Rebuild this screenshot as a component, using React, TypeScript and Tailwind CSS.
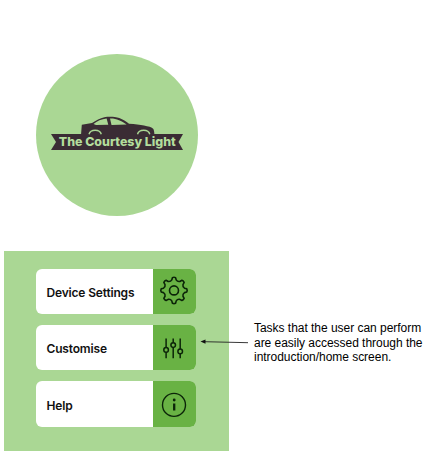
import type { ReactNode } from 'react';

function gearPath() {
  const at = (deg: number, r: number) => {
    const a = (deg * Math.PI) / 180;
    return `${(15 + r * Math.sin(a)).toFixed(2)} ${(15.4 - r * Math.cos(a)).toFixed(2)}`;
  };
  let d = `M${at(-7, 12.9)}`;
  for (let k = 0; k < 8; k++) {
    const a = k * 45;
    d += ` Q${at(a, 13.6)} ${at(a + 7, 12.9)}`;
    d += ` L${at(a + 12, 10.7)} Q${at(a + 22.5, 9.2)} ${at(a + 33, 10.7)} L${at(a + 38, 12.9)}`;
  }
  return d + 'Z';
}

const Gear = () => (
  <svg viewBox="0 0 30 30" className="h-[30px] w-[30px] -translate-y-px" fill="none" stroke="#0b2408" strokeWidth="1.6" strokeLinejoin="round">
    <path d={gearPath()} />
    <circle cx="15" cy="15.4" r="4.5" />
  </svg>
);

const Sliders = () => (
  <svg viewBox="0 0 30 30" className="h-[30px] w-[30px]" fill="none" stroke="#0b2408" strokeWidth="1.5">
    <path d="M7.1 5.5V14.5M7.1 19.3V25.3M14.2 5.5V9.7M14.2 14.5V25.3M21.2 5.5V16M21.2 20.8V25.3" />
    <circle cx="7.1" cy="16.9" r="2.3" />
    <circle cx="14.2" cy="12.1" r="2.3" />
    <circle cx="21.2" cy="18.4" r="2.3" />
  </svg>
);

const Info = () => (
  <svg viewBox="0 0 30 30" className="h-[30px] w-[30px]" fill="none" stroke="#0b2408" strokeWidth="1.4">
    <circle cx="15" cy="15.9" r="11.5" />
    <path d="M15.2 14.4V21.6" strokeWidth="2.3" />
    <circle cx="15.2" cy="11" r="1.4" fill="#0b2408" stroke="none" />
  </svg>
);

function Row({ label, children }: { label: string; children: ReactNode }) {
  return (
    <button className="flex h-[45.3px] w-full overflow-hidden rounded-[6px] bg-white text-left">
      <span className="flex flex-1 items-center pl-[10.5px] pt-[3px] text-[12px] font-semibold tracking-[-0.17px] text-[#111]">{label}</span>
      <span className="flex h-full w-[42.5px] items-center justify-center bg-[#69b244]">{children}</span>
    </button>
  );
}

const Logo = () => (
  <svg viewBox="0 0 162 162" className="h-[162px] w-[162px]">
    <circle cx="81" cy="81" r="81" fill="#aad794" />
    <path d="M45 81L45.8 70.7L56 68.9C60 66.5 64 64 68.3 63.2C73 62.5 79 62.7 83.3 64C87 65.3 90 67.5 93 69.7C99 70 104 70.6 108 71.6C112 72.5 116 73.2 117.4 75C118.2 77 118.4 79 118.4 81Z" fill="#3a2c34" />
    <path d="M57.5 70C61 67.3 65.5 65 70.6 64.6L72.3 70.7L60 71.1Z M74 64.4C80.5 64.2 85 66.5 90.7 70.6L75.5 71Z" fill="#aad794" />
    <path d="M15 80H147L142.5 88L147 96H15L20 88Z" fill="#3a2c34" />
    <path d="M53 80.2A6.3 5.1 0 0 1 65.3 80.2M101.5 80.2A6.3 5.1 0 0 1 113.8 80.2" fill="none" stroke="#aad794" strokeWidth="1.4" />
    <text x="22.8" y="91.8" textLength="117" lengthAdjust="spacingAndGlyphs" fontSize="12.3" fontWeight="800" fill="#b3dd9c" className="font-['Inter',sans-serif]">The Courtesy Light</text>
  </svg>
);

export default function App() {
  return (
    <div className="h-[455px] w-[445px] overflow-hidden bg-white pl-1 pt-[54px] font-['Inter',sans-serif]">
      <div className="ml-[32px] h-[162px] w-[162px]"><Logo /></div>
      <div className="mt-[35px] flex">
        <div className="relative h-[200px] w-[225px] bg-[#aad794] pl-[32px] pt-[17.8px]">
          <div className="flex w-[159.5px] flex-col gap-[11px]">
            <Row label="Device Settings"><Gear /></Row>
            <Row label="Customise"><Sliders /></Row>
            <Row label="Help"><Info /></Row>
          </div>
          <svg viewBox="0 0 52 8" className="absolute left-[195px] top-[87px] h-[8px] w-[52px]">
            <path d="M5 3.7L49 4.7" stroke="#222" strokeWidth="0.9" />
            <path d="M1.5 3.6L6.5 1.6V5.8Z" fill="#111" />
          </svg>
        </div>
        <p className="ml-[25px] mt-[70px] whitespace-nowrap font-['Liberation_Sans',sans-serif] text-[12px] leading-[14.5px] tracking-[-0.03px] text-black">
          Tasks that the user can perform<br />are easily accessed through the<br />introduction/home screen.
        </p>
      </div>
    </div>
  );
}
